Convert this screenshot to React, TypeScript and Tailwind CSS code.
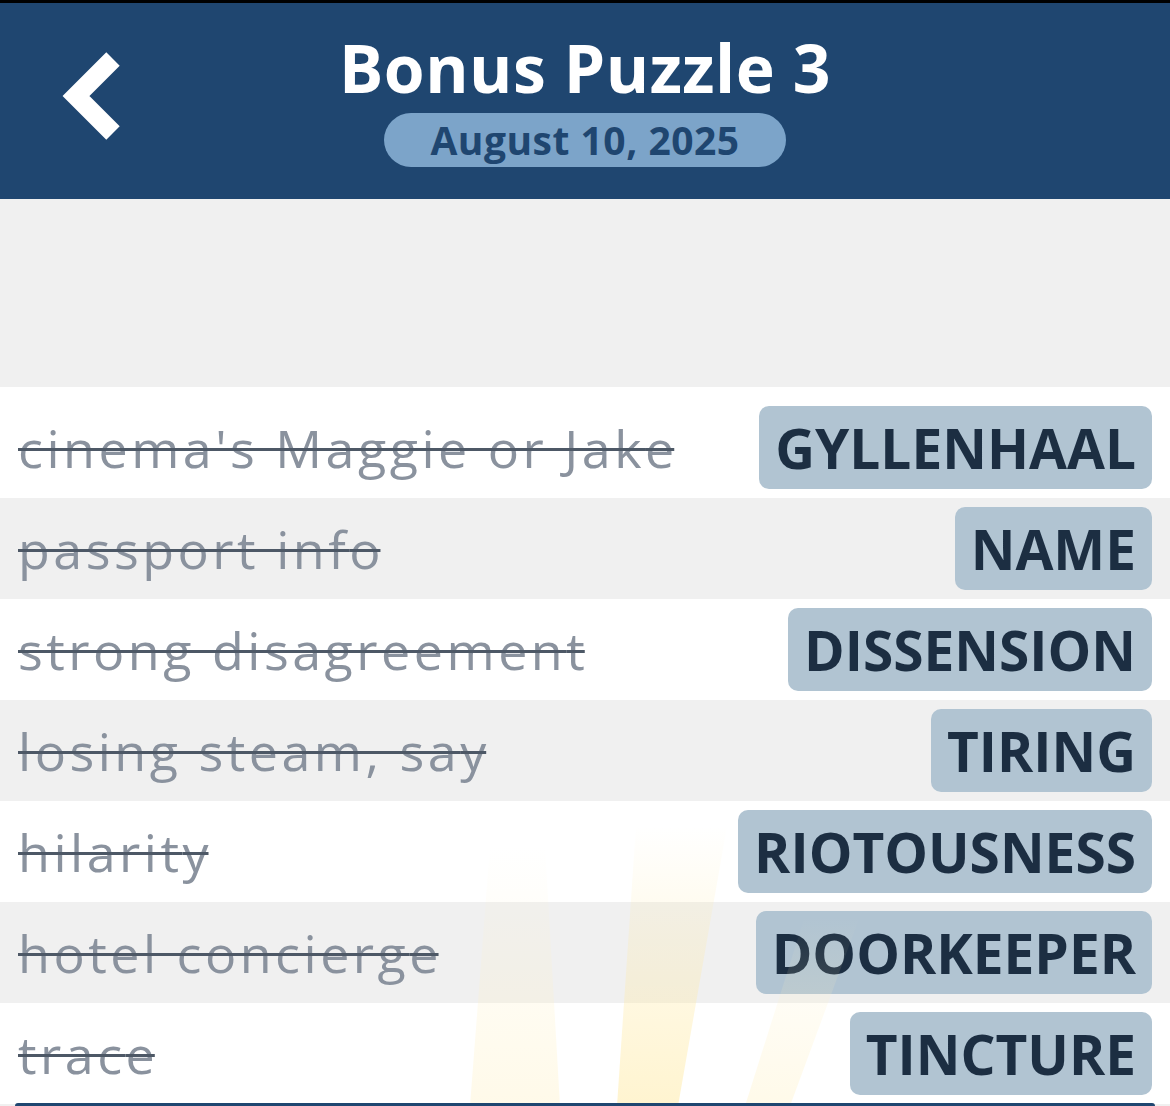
import React from 'react';

const clues = [
  { clue: "cinema's Maggie or Jake", answer: 'GYLLENHAAL' },
  { clue: 'passport info', answer: 'NAME' },
  { clue: 'strong disagreement', answer: 'DISSENSION' },
  { clue: 'losing steam, say', answer: 'TIRING' },
  { clue: 'hilarity', answer: 'RIOTOUSNESS' },
  { clue: 'hotel concierge', answer: 'DOORKEEPER' },
  { clue: 'trace', answer: 'TINCTURE' },
];

function BackChevron() {
  return (
    <svg width="60" height="90" viewBox="0 0 60 90" className="block">
      <polyline
        points="52,8 15,45 52,82"
        fill="none"
        stroke="#ffffff"
        strokeWidth="19"
        strokeLinecap="butt"
        strokeLinejoin="miter"
      />
    </svg>
  );
}

function Rays() {
  return (
    <svg
      className="pointer-events-none absolute bottom-0 left-0"
      width="1170"
      height="300"
      viewBox="0 0 1170 300"
    >
      <defs>
        <linearGradient id="ray" x1="0" y1="1" x2="0" y2="0">
          <stop offset="0" stopColor="#ffe9a0" stopOpacity="0.5" />
          <stop offset="0.6" stopColor="#ffe9a0" stopOpacity="0.22" />
          <stop offset="1" stopColor="#ffe9a0" stopOpacity="0" />
        </linearGradient>
        <linearGradient id="rayFaint" x1="0" y1="1" x2="0" y2="0">
          <stop offset="0" stopColor="#fff0c0" stopOpacity="0.35" />
          <stop offset="1" stopColor="#fff0c0" stopOpacity="0" />
        </linearGradient>
      </defs>
      <polygon points="470,300 560,300 545,40 490,40" fill="url(#rayFaint)" />
      <polygon points="617,300 678,300 727,20 636,20" fill="url(#ray)" />
      <polygon points="745,300 790,300 860,110 805,110" fill="url(#rayFaint)" />
    </svg>
  );
}

export default function App() {
  return (
    <div className="relative h-[1106px] w-[1170px] overflow-hidden bg-[#f0f0f0] font-['Open_Sans',sans-serif]">
      <div className="h-[3px] bg-black" />

      {/* Header */}
      <header className="relative flex h-[196px] flex-col items-center bg-[#1f4670]">
        <div className="absolute left-[61px] top-[48px]">
          <BackChevron />
        </div>
        <h1 className="mt-[23px] text-[66px] font-bold leading-[82px] tracking-[0.5px] text-white">
          Bonus Puzzle 3
        </h1>
        <div className="mt-[5px] flex h-[54px] w-[402px] items-center justify-center rounded-full bg-[#7ca4c9] text-[39px] font-bold tracking-[0.5px] text-[#1f4670]">
          August 10, 2025
        </div>
      </header>

      <div className="h-[188px]" />

      {/* Clue list */}
      <div className="bg-white pt-[10px]">
        {clues.map((c, i) => (
          <div
            key={c.answer}
            className={
              'flex h-[101px] items-center justify-between pl-[18px] pr-[18px] ' +
              (i % 2 === 1 ? 'bg-[#f0f0f0]' : 'bg-white')
            }
          >
            <span className="text-[52px] leading-none tracking-[3.5px] text-[#8a929e] line-through decoration-[#4d5866] decoration-[3px]">
              {c.clue.slice(0, -1)}
              <span className="tracking-normal">{c.clue.slice(-1)}</span>
            </span>
            <span className="flex h-[83px] items-center rounded-[10px] bg-[#b1c4d2] px-[16px] text-[55px] font-bold leading-none text-[#1c2e42]">
              {c.answer}
            </span>
          </div>
        ))}
      </div>

      <Rays />
      <div className="absolute bottom-0 left-[15px] h-[3px] w-[1140px] rounded-t-[6px] bg-[#1f4670]" />
    </div>
  );
}
